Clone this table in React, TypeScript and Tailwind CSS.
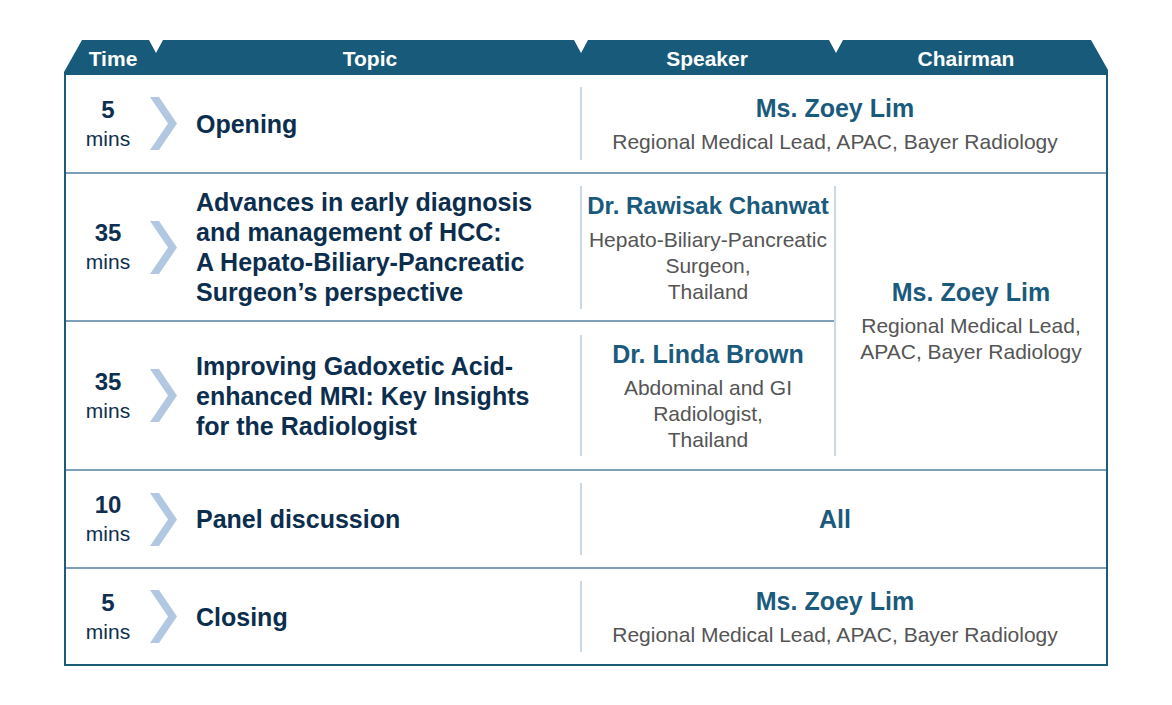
import React from "react";

const font = { fontFamily: '"Liberation Sans", Arial, sans-serif' };

function Chevron() {
  return (
    <svg width="27" height="53" viewBox="0 0 27 53" className="shrink-0">
      <polygon points="0,0 9,0 27,26.5 9,53 0,53 18,26.5" fill="#b1c8e0" />
    </svg>
  );
}

function TimeTopic({ mins, children, border = true }: { mins: string; children: React.ReactNode; border?: boolean }) {
  return (
    <div className={`flex items-center ${border ? "border-t-2 border-[#7d9fb7]" : ""}`}>
      <div className="w-[84px] text-center text-[#0e2f4f] leading-[29px]">
        <div className="text-[24px] font-bold">{mins}</div>
        <div className="text-[21px]">mins</div>
      </div>
      <Chevron />
      <div className="ml-[19px] text-[25px] font-bold leading-[30px] text-[#0c2e4e]">{children}</div>
    </div>
  );
}

function Person({ name, children, tight }: { name: string; children?: React.ReactNode; tight?: boolean }) {
  return (
    <div className="text-center">
      <div className={`${tight ? "text-[24px]" : "text-[25px]"} font-bold leading-[30px] text-[#1a5a7c]`}>{name}</div>
      {children && <div className="mt-[6px] text-[21px] leading-[26px] text-[#555555]">{children}</div>}
    </div>
  );
}

export default function App() {
  return (
    <div className="min-h-[705px] bg-white pl-[64px] pt-[40px]" style={font}>
      <div className="w-[1044px]">
        {/* header with notches */}
        <div className="flex h-[35px] items-center bg-[#175a7a] text-[21px] font-bold text-white [clip-path:polygon(0_35px,0_32px,18px_0,85px_0,92px_13px,99px_0,510px_0,517px_13px,524px_0,765px_0,772px_13px,779px_0,1027px_0,1044px_30px,1044px_35px)]">
          <div className="w-[98px] pt-[2px] text-center">Time</div>
          <div className="w-[416px] pt-[2px] text-center">Topic</div>
          <div className="w-[258px] pt-[2px] text-center">Speaker</div>
          <div className="w-[260px] pt-[2px] text-center">Chairman</div>
        </div>

        <div className="grid grid-cols-[514px_254px_272px] grid-rows-[97px_148px_149px_98px_97px] border-x-2 border-b-2 border-[#1d5b7a]">
          {/* row 1 */}
          <TimeTopic mins="5" border={false}>Opening</TimeTopic>
          <div className="col-span-2 py-[12px]">
            <div className="flex h-full items-center justify-center border-l-2 border-[#cad9e8] pr-[18px]">
              <Person name="Ms. Zoey Lim">Regional Medical Lead, APAC, Bayer Radiology</Person>
            </div>
          </div>

          {/* row 2 */}
          <TimeTopic mins="35">
            Advances in early diagnosis
            <br />
            and management of HCC:
            <br />
            A Hepato-Biliary-Pancreatic
            <br />
            Surgeon’s perspective
          </TimeTopic>
          <div className="border-t-2 border-[#7d9fb7] pt-[12px] pb-[11px]">
            <div className="flex h-full items-center justify-center border-l-2 border-[#cad9e8]">
              <Person name="Dr. Rawisak Chanwat" tight>
                Hepato-Biliary-Pancreatic
                <br />
                Surgeon,
                <br />
                Thailand
              </Person>
            </div>
          </div>
          <div className="row-span-2 border-t-2 border-[#7d9fb7] pt-[12px] pb-[13px]">
            <div className="flex h-full items-center justify-center border-l-2 border-[#cad9e8]">
              <Person name="Ms. Zoey Lim">
                Regional Medical Lead,
                <br />
                APAC, Bayer Radiology
              </Person>
            </div>
          </div>

          {/* row 3 */}
          <TimeTopic mins="35">
            Improving Gadoxetic Acid-
            <br />
            enhanced MRI: Key Insights
            <br />
            for the Radiologist
          </TimeTopic>
          <div className="border-t-2 border-[#7d9fb7] pt-[13px] pb-[13px]">
            <div className="flex h-full items-center justify-center border-l-2 border-[#cad9e8]">
              <Person name="Dr. Linda Brown">
                Abdominal and GI
                <br />
                Radiologist,
                <br />
                Thailand
              </Person>
            </div>
          </div>

          {/* row 4 */}
          <TimeTopic mins="10">Panel discussion</TimeTopic>
          <div className="col-span-2 border-t-2 border-[#7d9fb7] py-[12px]">
            <div className="flex h-full items-center justify-center border-l-2 border-[#cad9e8] pr-[18px]">
              <Person name="All" />
            </div>
          </div>

          {/* row 5 */}
          <TimeTopic mins="5">Closing</TimeTopic>
          <div className="col-span-2 border-t-2 border-[#7d9fb7] py-[12px]">
            <div className="flex h-full items-center justify-center border-l-2 border-[#cad9e8] pr-[18px]">
              <Person name="Ms. Zoey Lim">Regional Medical Lead, APAC, Bayer Radiology</Person>
            </div>
          </div>
        </div>
      </div>
    </div>
  );
}
